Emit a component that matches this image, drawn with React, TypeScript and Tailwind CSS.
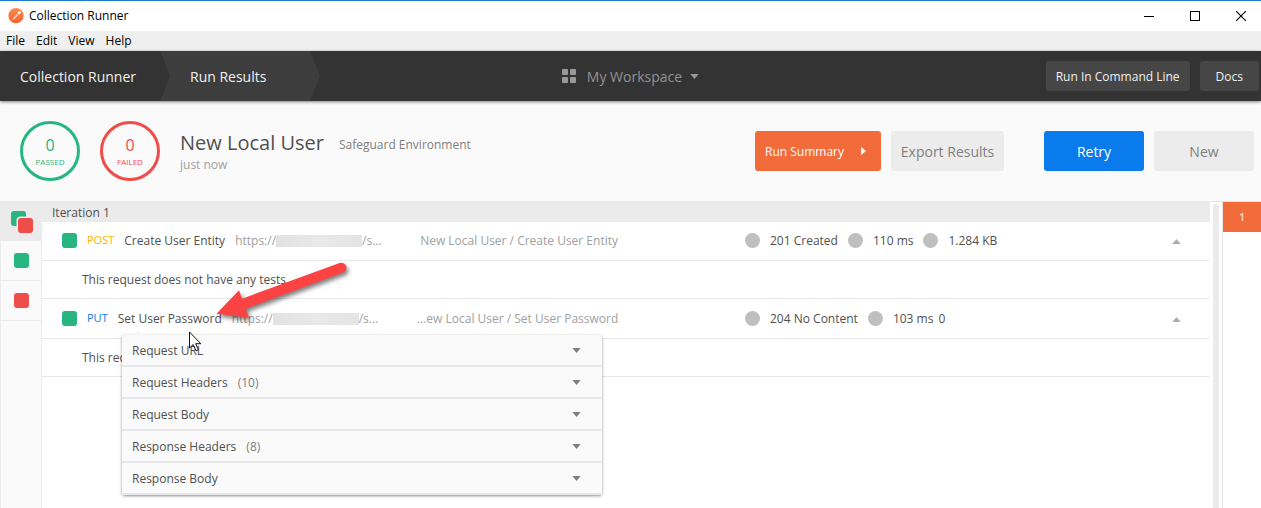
import React from "react";

const menus = ["File", "Edit", "View", "Help"];

interface Request {
  method: "POST" | "PUT";
  name: string;
  path: string;
  status: string;
  time: string;
  size?: string;
  extra?: string;
}

const requests: Request[] = [
  {
    method: "POST",
    name: "Create User Entity",
    path: "New Local User / Create User Entity",
    status: "201 Created",
    time: "110 ms",
    size: "1.284 KB",
  },
  {
    method: "PUT",
    name: "Set User Password",
    path: "…ew Local User / Set User Password",
    status: "204 No Content",
    time: "103 ms",
    extra: "0",
  },
];

const sections = [
  { label: "Request URL" },
  { label: "Request Headers", count: 10 },
  { label: "Request Body" },
  { label: "Response Headers", count: 8 },
  { label: "Response Body" },
];

function Logo() {
  return (
    <svg width="16" height="16" viewBox="0 0 16 16" aria-hidden="true">
      <defs>
        <linearGradient id="logo" x1="0" y1="0" x2="0" y2="1">
          <stop offset="0" stopColor="#fb8a50" />
          <stop offset="1" stopColor="#f8602e" />
        </linearGradient>
      </defs>
      <circle cx="8" cy="7.7" r="7.6" fill="url(#logo)" />
      <path d="M3.8 12.2 5.6 9.4 9.4 5.4 10.6 6.6 6.8 10.4Z" fill="#fde3d5" />
      <path d="M5.8 10 10 6" stroke="#f4713b" strokeWidth="0.4" />
      <circle cx="11.3" cy="4.5" r="1.5" fill="#fff" />
    </svg>
  );
}

function CaretDown({ className }: { className: string }) {
  return (
    <svg width="9" height="5" viewBox="0 0 9 5" className={className} aria-hidden="true">
      <path d="M0.3 0H8.7L4.5 5Z" fill="currentColor" />
    </svg>
  );
}

function TitleBar() {
  return (
    <div className="flex h-[31px] items-center border-t border-[#1a7bd0] bg-white pl-2 text-black">
      <Logo />
      <span className="ml-[5px] flex-1 text-xs">Collection Runner</span>
      <button type="button" aria-label="Minimize" className="flex h-full w-[46px] items-center justify-center">
        <svg width="10" height="10" shapeRendering="crispEdges">
          <path d="M0 5.5H10" stroke="#000" />
        </svg>
      </button>
      <button type="button" aria-label="Maximize" className="flex h-full w-[46px] items-center justify-center">
        <svg width="10" height="10" shapeRendering="crispEdges">
          <rect x="0.5" y="0.5" width="9" height="9" fill="none" stroke="#000" />
        </svg>
      </button>
      <button type="button" aria-label="Close" className="flex h-full w-[43px] items-center justify-center pl-[3px]">
        <svg width="10" height="10">
          <path d="M0 0 10 10M10 0 0 10" stroke="#000" strokeWidth="1.1" />
        </svg>
      </button>
    </div>
  );
}

function MenuBar() {
  return (
    <nav className="flex h-5 items-center gap-[11px] bg-[#efefef] pl-[6px] text-xs text-black">
      {menus.map((m) => (
        <button type="button" key={m}>
          {m}
        </button>
      ))}
    </nav>
  );
}

function Header() {
  return (
    <header className="relative z-10 grid h-[50px] grid-cols-[1fr_auto_1fr] items-center bg-[#333333] shadow-[0_1px_3px_rgba(0,0,0,0.5)]">
      <div className="flex h-full text-sm font-medium text-[#f0f0f0]">
        <a href="#runner" className="flex w-[160px] items-center pt-[2px] pl-5">
          Collection Runner
        </a>
        <a
          href="#results"
          className="flex w-[160px] items-center bg-[#3d3d3d] pt-[2px] pl-[30px] [clip-path:polygon(0_0,150px_0,160px_50%,150px_100%,0_100%,10px_50%)]"
        >
          Run Results
        </a>
      </div>
      <button type="button" className="flex items-center text-sm font-medium text-[#929292]">
        <svg width="14" height="14" fill="#999999" className="mr-[11px]" aria-hidden="true">
          <rect width="6" height="6" rx="1" />
          <rect x="8" width="6" height="6" rx="1" />
          <rect y="8" width="6" height="6" rx="1" />
          <rect x="8" y="8" width="6" height="6" rx="1" />
        </svg>
        <span className="pt-[2px]">My Workspace</span>
        <CaretDown className="ml-2 text-[#999999]" />
      </button>
      <div className="flex justify-end gap-[10px] pr-[2px] text-xs font-medium text-[#f0f0f0]">
        <button type="button" className="h-[30px] rounded-[3px] bg-[#464646] px-[10px] pt-px">
          Run In Command Line
        </button>
        <button type="button" className="h-[30px] rounded-[3px] bg-[#464646] px-4 pt-px">
          Docs
        </button>
      </div>
    </header>
  );
}

function Counter({ label, className }: { label: string; className: string }) {
  return (
    <div className={"flex size-[60px] flex-col items-center justify-center rounded-full border-[3px] pt-1 " + className}>
      <span className="text-base leading-[18px]">0</span>
      <span className="text-[8px] leading-4">{label}</span>
    </div>
  );
}

function Summary() {
  return (
    <section className="flex h-[100px] items-center bg-[#fafafa] pr-[7px] pl-5">
      <Counter label="PASSED" className="mr-5 border-[#27b681] text-[#27b681]" />
      <Counter label="FAILED" className="mr-5 border-[#ee4e49] text-[#ee4e49]" />
      <div className="flex-1 pt-1">
        <div className="flex items-center">
          <h1 className="text-xl leading-6 text-[#505050]">New Local User</h1>
          <span className="ml-[15px] pt-1 text-xs text-[#808080]">Safeguard Environment</span>
        </div>
        <p className="text-xs leading-5 text-[#a0a0a0]">just now</p>
      </div>
      <button
        type="button"
        className="flex h-10 w-[126px] items-center justify-between rounded-[3px] bg-[#f26b3a] pr-[15px] pl-[10px] text-xs font-medium text-white"
      >
        <span className="pt-[2px]">Run Summary</span>
        <svg width="5" height="8" aria-hidden="true">
          <path d="M0 0 5 4 0 8Z" fill="#fff" />
        </svg>
      </button>
      <button type="button" className="ml-[10px] h-10 w-[113px] rounded-[3px] bg-[#ececec] pt-[2px] text-sm text-[#808080]">
        Export Results
      </button>
      <button type="button" className="ml-10 h-10 w-[100px] rounded-[3px] bg-[#097bed] pt-[2px] text-sm font-medium text-white">
        Retry
      </button>
      <button type="button" className="ml-[10px] h-10 w-[100px] rounded-[3px] bg-[#ececec] pt-[2px] text-sm text-[#808080]">
        New
      </button>
    </section>
  );
}

function Filters() {
  const base = "flex h-10 w-full items-center justify-center border-b border-[#ebebeb]";
  return (
    <aside className="w-[42px] shrink-0 border-x border-[#ebebeb] bg-[#fafafa]">
      <button type="button" aria-label="All results" className={base + " bg-[#ebebeb] pt-[3px] pl-[2px]"}>
        <svg width="22" height="22" aria-hidden="true">
          <rect x="0" y="0" width="15" height="15" rx="3" fill="#27b681" />
          <rect x="5.5" y="5.5" width="18" height="18" rx="4" fill="#ebebeb" />
          <rect x="7" y="7" width="15" height="15" rx="3" fill="#ee4e49" />
        </svg>
      </button>
      <button type="button" aria-label="Passed results" className={base}>
        <span className="size-[15px] rounded-[3px] bg-[#27b681]" />
      </button>
      <button type="button" aria-label="Failed results" className={base}>
        <span className="size-[15px] rounded-[3px] bg-[#ee4e49]" />
      </button>
    </aside>
  );
}

function Dot() {
  return <span className="size-[15px] shrink-0 rounded-full bg-[#bfbfbf]" />;
}

function RequestRow({ r, children }: { r: Request; children?: React.ReactNode }) {
  return (
    <div className="relative flex h-10 items-center border-b border-[#e8e8e8] pl-5 whitespace-nowrap">
      <div className="flex w-[355px] shrink-0 items-center">
        <span className="size-[15px] rounded-[3px] bg-[#27b681]" />
        <span
          className={
            r.method === "POST" ? "ml-[10px] text-[11px] text-[#ffb400]" : "ml-[10px] text-[11px] text-[#097bed]"
          }
        >
          {r.method}
        </span>
        <span className="ml-[10px]">{r.name}</span>
        <span className="ml-[10px] flex items-center text-[#a0a0a0]">
          https://
          <span className="h-3 w-[86px] bg-linear-to-r from-[#e2e2e2] via-[#e9e9e9] to-[#e4e4e4]" />
          /s...
        </span>
      </div>
      <span className="w-[201px] shrink-0 text-right text-[#a0a0a0]">{r.path}</span>
      <div className="ml-[127px] flex flex-1 items-center gap-[10px]">
        <Dot />
        <span>{r.status}</span>
        <Dot />
        <span>
          {r.time}
          {r.extra && <span className="ml-[5px]">{r.extra}</span>}
        </span>
        {r.size && <Dot />}
        {r.size && <span>{r.size}</span>}
      </div>
      <button type="button" aria-label="Collapse" className="mr-[29px] pt-px">
        <CaretDown className="rotate-180 text-[#acacac]" />
      </button>
      {children}
    </div>
  );
}

function Details() {
  return (
    <div className="absolute top-9 left-20 z-10 w-[480px] rounded-[3px] bg-[#fafafa] shadow-[0_1px_3px_rgba(0,0,0,0.45)]">
      <svg width="12" height="6" className="absolute -top-[5px] left-[11px]" aria-hidden="true">
        <path d="M0 6 6 0 12 6Z" fill="#f7f7f7" />
      </svg>
      {sections.map((s) => (
        <button
          type="button"
          key={s.label}
          className="flex h-8 w-full items-center border-b-2 border-[#e8e8e8] pr-[21px] pl-[10px] text-left"
        >
          <span className="pt-[2px]">{s.label}</span>
          {s.count && <span className="ml-[10px] pt-[2px] text-[#808080]">({s.count})</span>}
          <CaretDown className="ml-auto text-[#808080]" />
        </button>
      ))}
      <svg width="15" height="22" viewBox="0 0 15 22" className="absolute -top-[4px] left-[67px]" aria-hidden="true">
        <path
          d="M0.5 1V17L4.2 13.5 7 19.8 9.3 18.8 6.7 12.7H11.8Z"
          fill="#fff"
          stroke="#111"
          strokeWidth="1"
        />
      </svg>
      <svg
        width="150"
        height="80"
        viewBox="0 0 150 80"
        className="absolute -top-[85px] left-[90px] overflow-visible"
        aria-hidden="true"
      >
        <g className="drop-shadow-[2px_3px_2px_rgba(0,0,0,0.5)]">
          <path d="M4.5 63.8 27 40.3 30 48.7 127.6 13A5 5 0 0 1 131 22.6L33.7 58.7 37 67.7Z" fill="#fb4343" />
        </g>
      </svg>
    </div>
  );
}

export default function App() {
  return (
    <div className="flex min-h-screen flex-col bg-white font-['Open_Sans',sans-serif] text-xs text-[#505050]">
      <TitleBar />
      <MenuBar />
      <Header />
      <Summary />
      <main className="flex flex-1">
        <Filters />
        <div className="min-w-0 flex-1">
          <h2 className="relative -mb-px h-[21px] bg-[#ebebeb] pl-[10px] leading-6">Iteration 1</h2>
          {requests.map((r) => (
            <React.Fragment key={r.name}>
              <RequestRow r={r}>{r.method === "PUT" && <Details />}</RequestRow>
              <p className="flex h-[38px] items-center border-b border-[#e8e8e8] pl-10">
                This request does not have any tests.
              </p>
            </React.Fragment>
          ))}
        </div>
        <div className="flex w-3 shrink-0 border-t border-[#e6e6e6] pt-[2px] pl-[3px]">
          <div className="w-[6px] rounded-t-full bg-[#ebebeb]" />
        </div>
        <aside className="w-[39px] shrink-0 border-t border-l border-[#e6e6e6]">
          <button type="button" className="h-[30px] w-full bg-[#f26b3a] pt-px text-[10px] font-semibold text-[#fbe0d5]">
            1
          </button>
        </aside>
      </main>
    </div>
  );
}
